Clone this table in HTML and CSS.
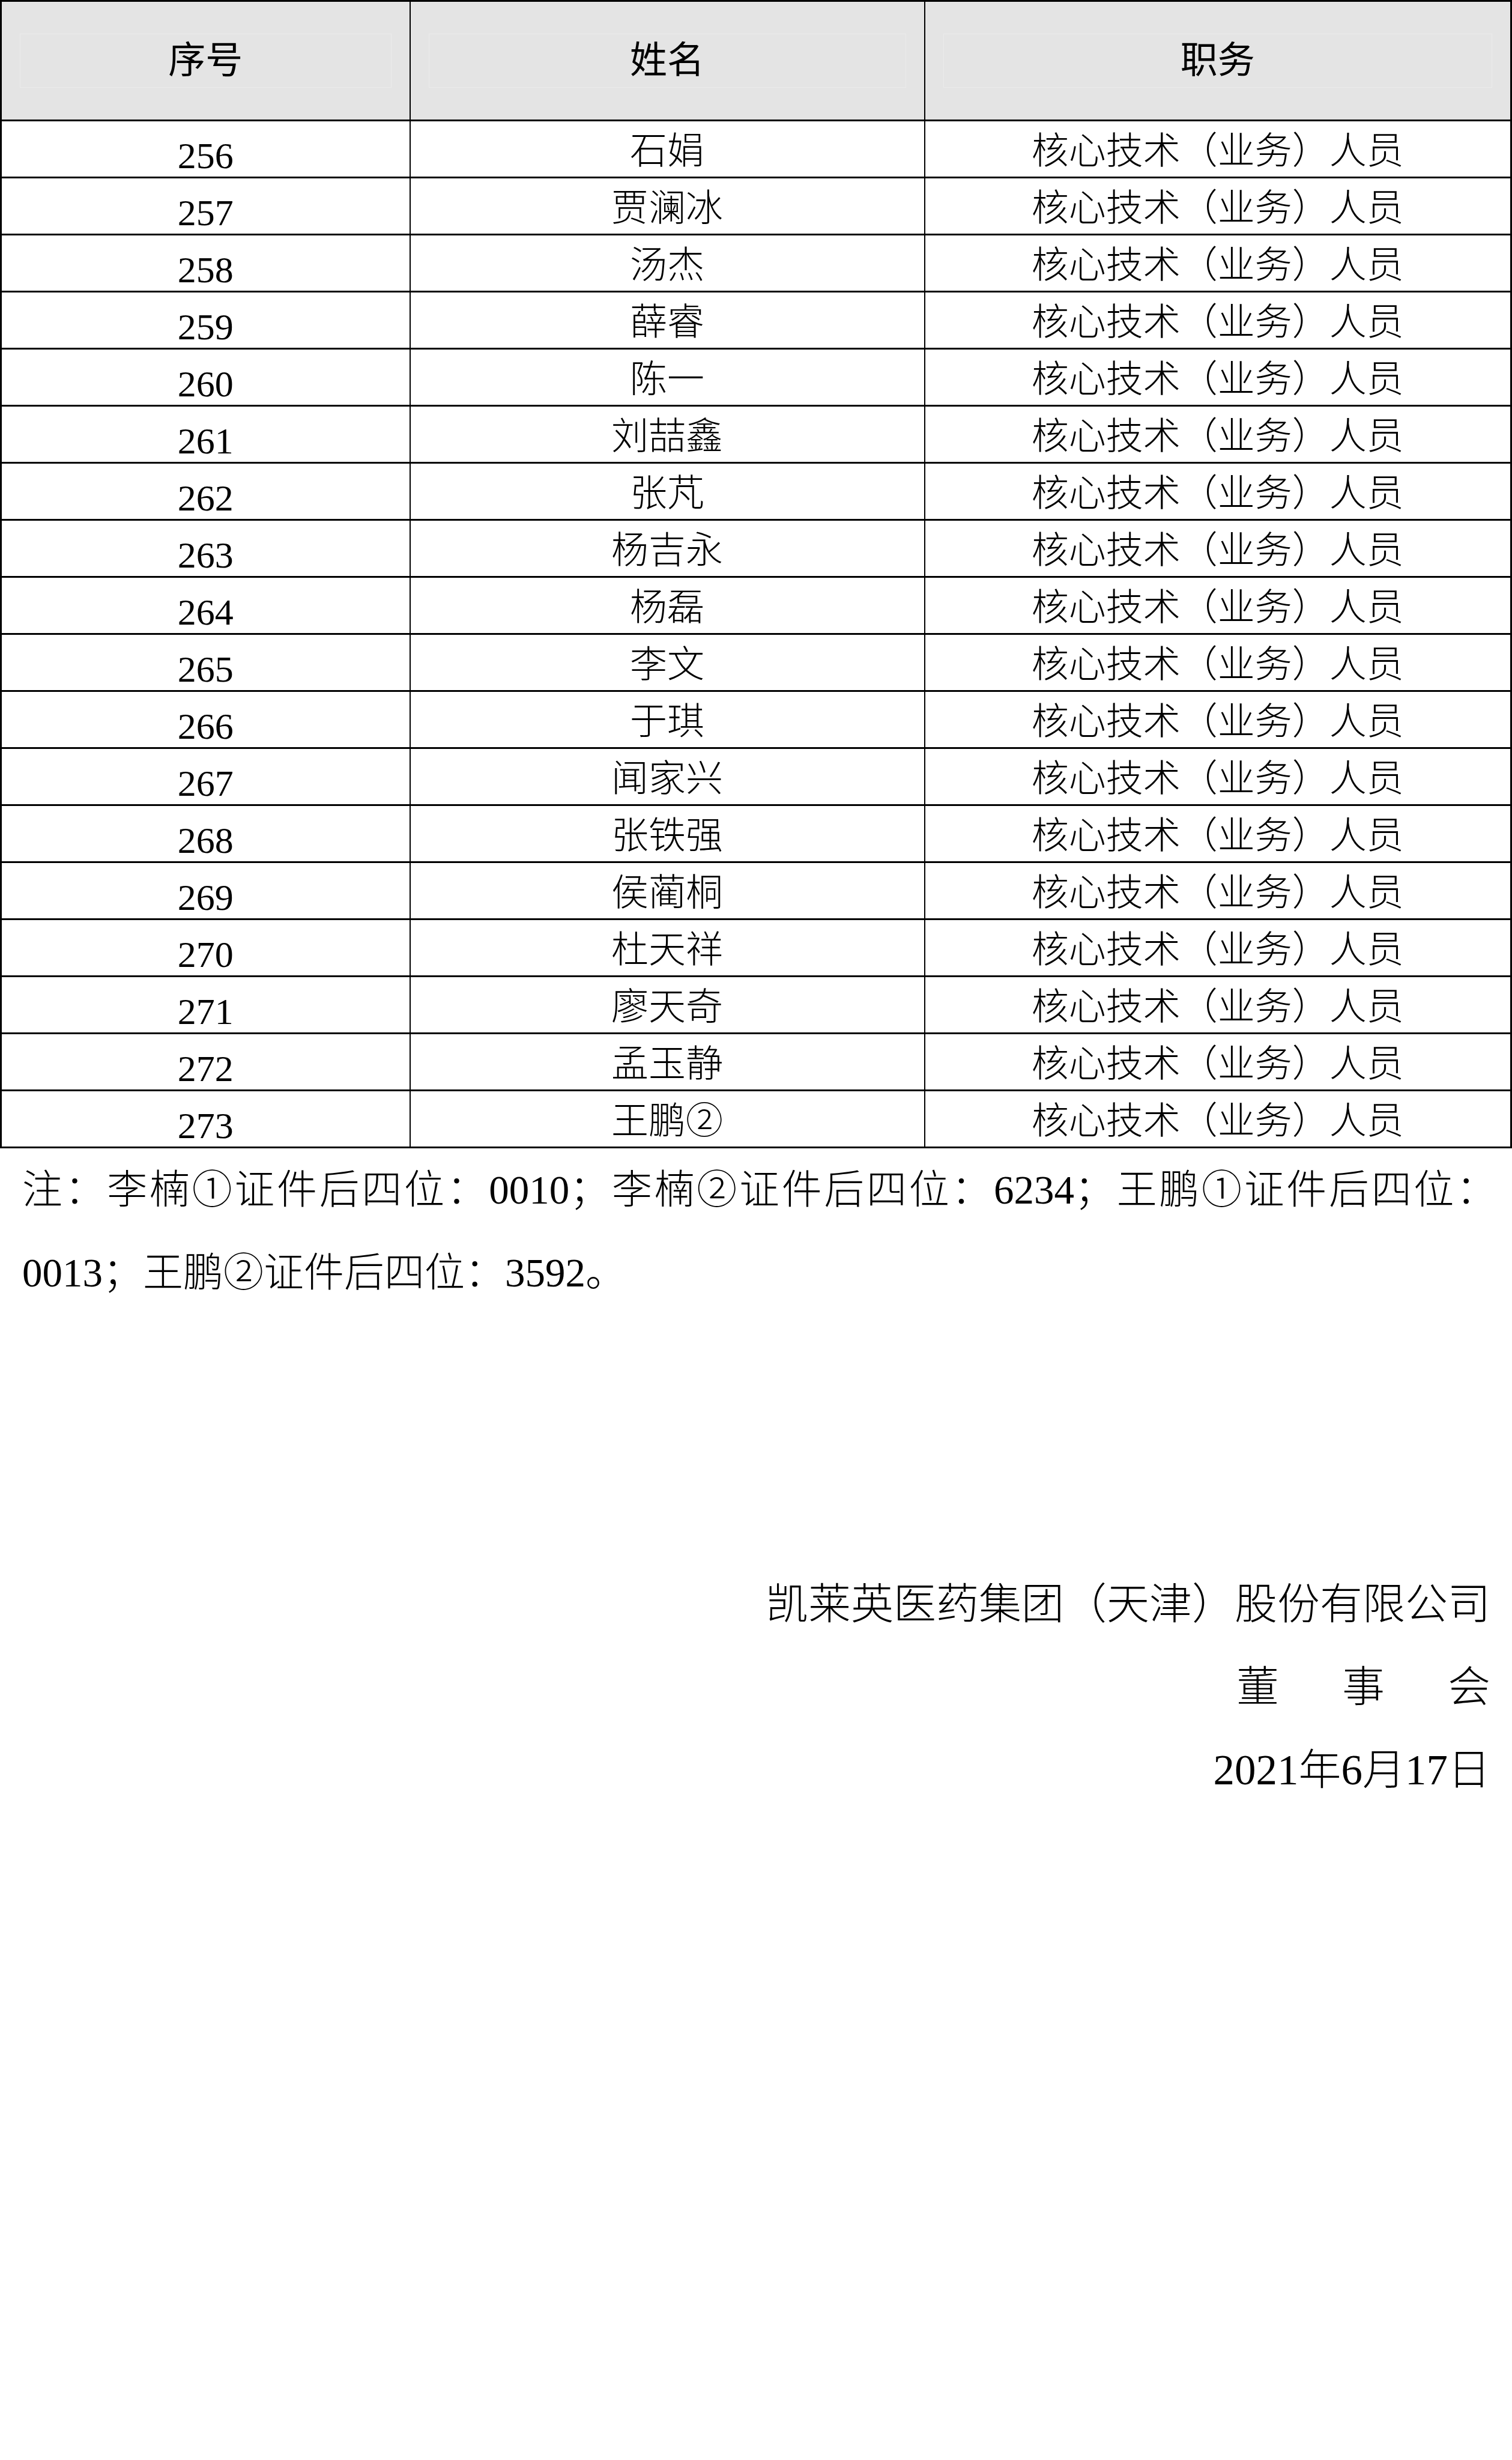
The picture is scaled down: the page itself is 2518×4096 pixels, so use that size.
FILE: index.html
```html
<!DOCTYPE html>
<html lang="zh-CN">
<head>
<meta charset="utf-8">
<title>核心技术（业务）人员名单</title>
<link rel="stylesheet" href="styles.css">
</head>
<body>
<div class="page">
  <table class="roster">
    <colgroup><col class="c-no"><col class="c-name"><col class="c-role"></colgroup>
    <thead>
      <tr><th><span class="hbox">序号</span></th><th><span class="hbox">姓名</span></th><th><span class="hbox">职务</span></th></tr>
    </thead>
    <tbody>
      <tr><td>256</td><td>石娟</td><td>核心技术（业务）人员</td></tr>
      <tr><td>257</td><td>贾澜冰</td><td>核心技术（业务）人员</td></tr>
      <tr><td>258</td><td>汤杰</td><td>核心技术（业务）人员</td></tr>
      <tr><td>259</td><td>薛睿</td><td>核心技术（业务）人员</td></tr>
      <tr><td>260</td><td>陈一</td><td>核心技术（业务）人员</td></tr>
      <tr><td>261</td><td>刘喆鑫</td><td>核心技术（业务）人员</td></tr>
      <tr><td>262</td><td>张芃</td><td>核心技术（业务）人员</td></tr>
      <tr><td>263</td><td>杨吉永</td><td>核心技术（业务）人员</td></tr>
      <tr><td>264</td><td>杨磊</td><td>核心技术（业务）人员</td></tr>
      <tr><td>265</td><td>李文</td><td>核心技术（业务）人员</td></tr>
      <tr><td>266</td><td>于琪</td><td>核心技术（业务）人员</td></tr>
      <tr><td>267</td><td>闻家兴</td><td>核心技术（业务）人员</td></tr>
      <tr><td>268</td><td>张铁强</td><td>核心技术（业务）人员</td></tr>
      <tr><td>269</td><td>侯蔺桐</td><td>核心技术（业务）人员</td></tr>
      <tr><td>270</td><td>杜天祥</td><td>核心技术（业务）人员</td></tr>
      <tr><td>271</td><td>廖天奇</td><td>核心技术（业务）人员</td></tr>
      <tr><td>272</td><td>孟玉静</td><td>核心技术（业务）人员</td></tr>
      <tr><td>273</td><td>王鹏②</td><td>核心技术（业务）人员</td></tr>
    </tbody>
  </table>

  <div class="note">
    <span class="note-line">注：李楠①证件后四位：0010；李楠②证件后四位：6234；王鹏①证件后四位：</span>
    <span class="note-line last">0013；王鹏②证件后四位：3592。</span>
  </div>

  <div class="sign">
    <div class="sign-line">凯莱英医药集团（天津）股份有限公司</div>
    <div class="sign-line spaced"><span>董</span><span>事</span><span>会</span></div>
    <div class="sign-line">2021年6月17日</div>
  </div>
</div>
</body>
</html>
```
FILE: styles.css
```css
html, body {
  margin: 0;
  padding: 0;
  background: #ffffff;
}

.page {
  width: 2518px;
  color: #000;
  font-family: "Liberation Serif", "Noto Sans CJK SC", serif;
  font-weight: 300;
}

.roster {
  border-collapse: collapse;
  table-layout: fixed;
  width: 2515px;
  font-size: 62px;
}

.c-no { width: 681px; }
.c-name { width: 857px; }
.c-role { width: 977px; }

.roster th,
.roster td {
  border-top: 3px solid #000;
  border-bottom: 3px solid #000;
  border-left: 2px solid #000;
  border-right: 2px solid #000;
  padding: 0;
  text-align: center;
}

.roster thead tr { height: 199px; }

.roster th {
  background: #e4e4e4;
  font-weight: 400;
  vertical-align: middle;
}

.roster th:first-child,
.roster td:first-child { border-left-width: 3px; }
.roster th:last-child,
.roster td:last-child { border-right-width: 3px; }

.hbox {
  display: block;
  margin: 0 30px;
  height: 88px;
  line-height: 88px;
  border: 1px solid #ebebeb;
}

.roster tbody tr { height: 95px; }

.roster td {
  vertical-align: bottom;
  line-height: 62px;
  padding-bottom: 4px;
}

.roster td + td {
  padding-bottom: 11px;
}

.note {
  padding: 0 26px 0 37px;
  font-size: 67px;
  line-height: 138px;
}

.note-line {
  display: block;
  text-align: justify;
  text-align-last: justify;
}

.note-line.last {
  text-align: left;
  text-align-last: left;
}

.sign {
  margin-top: 414px;
  padding-right: 36px;
  font-size: 71px;
  line-height: 138px;
  text-align: right;
}

.sign-line.spaced {
  display: flex;
  justify-content: flex-end;
  gap: 105px;
}
```
